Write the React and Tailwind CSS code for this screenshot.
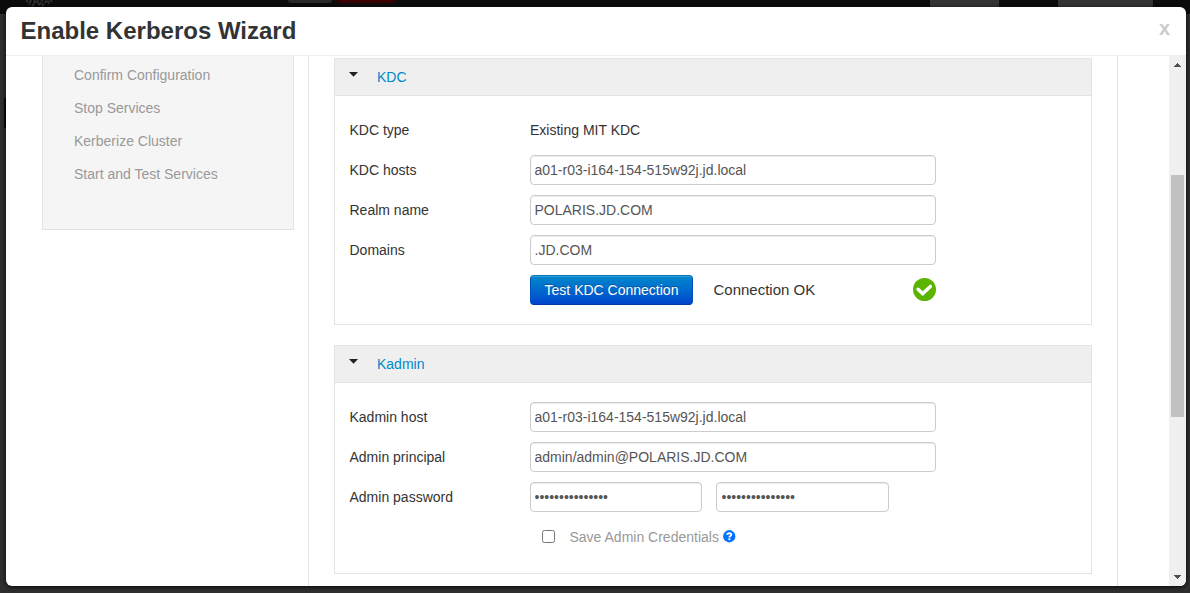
import React from "react";

const steps = [
  "Confirm Configuration",
  "Stop Services",
  "Kerberize Cluster",
  "Start and Test Services",
];

const inputClass =
  "block h-[30px] rounded-[4px] border border-[#ccc] bg-white text-sm leading-5 text-[#555] shadow-[inset_0_1px_1px_rgba(0,0,0,0.075)] outline-none";

function Backdrop() {
  return (
    <div className="absolute inset-0 flex flex-col bg-[#2e2e2e]">
      <div className="flex h-[14px] items-start bg-[#0c0c0c]">
        <svg className="ml-[24px] shrink-0" width="30" height="7" viewBox="0 0 30 7" fill="none" stroke="#303030" strokeWidth="2" strokeDasharray="3 1.5">
          <path d="M2 0L6 4M7 0L5 5M11 0L9 5L14 1L15 6L18 0L19 5L23 0L25 3L28 0" />
        </svg>
        <div className="ml-[234px] h-[3px] w-[44px] rounded-b-[3px] bg-[#292929]" />
        <div className="ml-[5px] h-[3px] w-[58px] rounded-b-[3px] bg-[#3b0000]" />
        <div className="ml-[535px] h-[14px] w-[69px] bg-[#333]" />
        <div className="ml-[59px] h-[14px] w-[95px] bg-[#333]" />
      </div>
      <div className="mt-[84px] ml-[4px] h-[30px] w-[2px] bg-[#0a0a0a]" />
    </div>
  );
}

function Row({ label, children }) {
  return (
    <div className="flex h-[30px] items-center">
      <div className="w-[180.5px] shrink-0">{label}</div>
      {children}
    </div>
  );
}

function Panel({ title, className, children }) {
  return (
    <section className={"flex flex-col border border-[#e3e3e3] " + className}>
      <header className="flex h-[37px] shrink-0 items-center border-b border-[#e3e3e3] bg-[#efefef] pl-[14px]">
        <svg className="mb-[5px]" width="9" height="5" viewBox="0 0 9 5">
          <path d="M0 0H9L4.5 4.7Z" fill="#222" />
        </svg>
        <span className="ml-[19px] text-[#08c]">{title}</span>
      </header>
      {children}
    </section>
  );
}

export default function App() {
  return (
    <div className="relative h-[593px] w-[1190px] overflow-hidden pt-[7px] pl-[6px] font-['Liberation_Sans',Arial,sans-serif] text-sm leading-5 text-[#333]">
      <Backdrop />
      <div className="relative flex h-[579px] w-[1180px] flex-col overflow-hidden rounded-[6px] bg-white shadow-[0_1px_4px_rgba(0,0,0,0.9)]">
        <header className="flex h-[49px] shrink-0 items-center justify-between border-b border-[#eee] pr-[16px] pl-[14.5px]">
          <h3 className="text-[24px] leading-[30px] font-bold">Enable Kerberos Wizard</h3>
          <button className="mb-[6px] text-[20px] leading-5 font-bold text-[#ccc]">x</button>
        </header>
        <div className="flex min-h-0 flex-1">
          <aside className="ml-[36px] h-[174px] w-[252px] shrink-0 border border-t-0 border-[#e3e3e3] bg-[#f5f5f5] pt-[9px] pl-[31px]">
            <ul className="flex flex-col gap-[13px] text-[#999]">
              {steps.map((s) => (
                <li key={s}>{s}</li>
              ))}
            </ul>
          </aside>
          <main className="ml-[14px] flex w-[810px] shrink-0 flex-col border-x border-[#e3e3e3] pt-[2px] pl-[25px]">
            <Panel title="KDC" className="h-[267px] w-[758px] shrink-0">
              <div className="flex flex-col gap-[10px] pt-[19px] pl-[14.5px]">
                <Row label="KDC type">Existing MIT KDC</Row>
                <Row label="KDC hosts">
                  <input className={inputClass + " w-[406px] px-[3.5px]"} defaultValue="a01-r03-i164-154-515w92j.jd.local" />
                </Row>
                <Row label="Realm name">
                  <input className={inputClass + " w-[406px] px-[3.5px]"} defaultValue="POLARIS.JD.COM" />
                </Row>
                <Row label="Domains">
                  <input className={inputClass + " w-[406px] px-[3.5px]"} defaultValue=".JD.COM" />
                </Row>
                <Row label="">
                  <button className="h-[30px] w-[163px] rounded-[4px] border border-[#0051bb] border-t-[#0074bc] border-b-[#003a9e] bg-linear-to-b from-[#0088cc] to-[#0044cc] text-white shadow-[inset_0_1px_0_rgba(255,255,255,0.2)] text-shadow-[0_-1px_0_rgba(0,0,0,0.25)]">
                    Test KDC Connection
                  </button>
                  <span className="ml-[20.5px] w-[199.5px] text-[15px]">Connection OK</span>
                  <svg className="mb-px" width="23" height="23" viewBox="0 0 23 23">
                    <circle cx="11.5" cy="11.5" r="11.5" fill="#5ab400" />
                    <path d="M5 11.2l4.7 4.4 7.7-7.2" fill="none" stroke="#fff" strokeWidth="3.4" strokeLinecap="round" />
                  </svg>
                </Row>
              </div>
            </Panel>
            <Panel title="Kadmin" className="mt-5 h-[229px] w-[758px] shrink-0">
              <div className="flex flex-col gap-[10px] pt-[19px] pl-[14.5px]">
                <Row label="Kadmin host">
                  <input className={inputClass + " w-[406px] px-[3.5px]"} defaultValue="a01-r03-i164-154-515w92j.jd.local" />
                </Row>
                <Row label="Admin principal">
                  <input className={inputClass + " w-[406px] px-[3.5px]"} defaultValue="admin/admin@POLARIS.JD.COM" />
                </Row>
                <Row label="Admin password">
                  <input type="password" className={inputClass + " w-[172px] px-[3.5px]"} defaultValue="passwordpasswor" />
                  <input type="password" className={inputClass + " ml-[14px] w-[173px] px-[4.5px]"} defaultValue="passwordpasswor" />
                </Row>
                <Row label="">
                  <label className="flex items-center pl-[12px] text-[#999]">
                    <input type="checkbox" className="m-0 mb-px h-[13px] w-[13px]" />
                    <span className="ml-[14.5px]">Save Admin Credentials</span>
                  </label>
                  <svg className="mb-px ml-[4.5px]" width="12.5" height="12.5" viewBox="0 0 12 12">
                    <circle cx="6" cy="6" r="5.9" fill="#0572ff" />
                    <path d="M4 4.6C4.1 2.6 8 2.5 8 4.6C8 5.9 6.1 5.8 6.1 7.2" fill="none" stroke="#fff" strokeWidth="1.8" />
                    <rect x="5.2" y="8" width="1.8" height="1.7" fill="#fff" />
                  </svg>
                </Row>
              </div>
            </Panel>
          </main>
          <div className="ml-auto flex w-[17px] flex-col items-center bg-[#f0f0f0]">
            <svg className="mt-[7px] shrink-0" width="7" height="4" viewBox="0 0 7 4" shapeRendering="crispEdges">
              <path d="M3 0h1v1h1v1h1v1h1v1H0V3h1V2h1V1h1z" fill="#505050" />
            </svg>
            <div className="mt-[108px] h-[242px] w-[13px] shrink-0 bg-[#c1c1c1]" />
            <svg className="mt-auto mb-[7px] shrink-0" width="7" height="4" viewBox="0 0 7 4" shapeRendering="crispEdges">
              <path d="M3 4h1V3h1V2h1V1h1V0H0v1h1v1h1v1h1z" fill="#505050" />
            </svg>
          </div>
        </div>
      </div>
    </div>
  );
}
